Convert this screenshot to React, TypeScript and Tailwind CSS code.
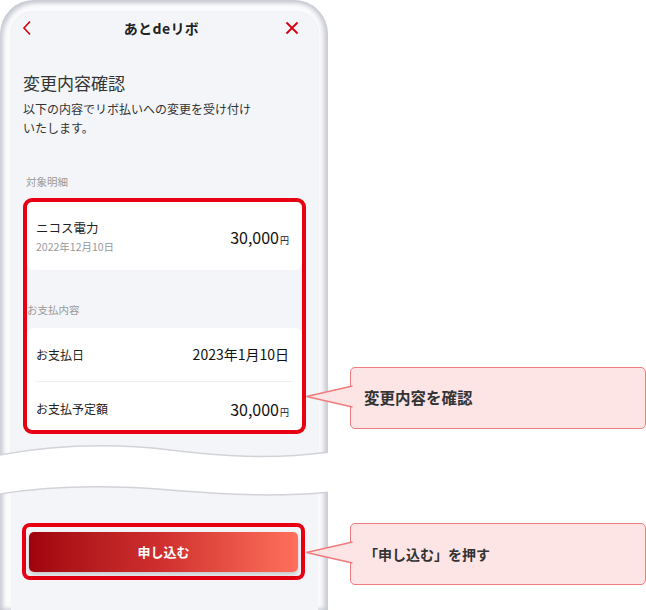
import React from 'react';

const FONT = "font-['Noto_Sans_CJK_JP','Noto_Sans',sans-serif]";

function Callout({ children, className = '' }: { children: React.ReactNode; className?: string }) {
  return (
    <div className={`relative flex h-[62px] w-[296px] items-center rounded-[5px] border-[1.5px] border-[#ef7b7d] bg-[#fde5e6] pl-[13px] ${className}`}>
      {/* tail pointing at the highlighted area */}
      <svg className="absolute left-[-46px] top-[18px] overflow-visible" width="48" height="24" viewBox="0 0 48 24">
        <polyline points="47.5,0 1.5,10.5 47.5,21" fill="#fde5e6" stroke="#ef7b7d" strokeWidth="1.5" strokeLinejoin="miter" />
      </svg>
      {children}
    </div>
  );
}

export default function App() {
  return (
    <div className={`flex h-[610px] w-[646px] overflow-hidden bg-white ${FONT}`}>
      {/* phone */}
      <div className="flex w-[330px] flex-col">
        {/* upper screen */}
        <div className="relative h-[462px] w-[328px] overflow-hidden">
          <div className="h-full rounded-t-[34px] bg-[#fbfbfd] pl-[11px] pr-[10px] pt-[12px] shadow-[inset_3px_3px_4px_#c8cad3,inset_-4px_0_5px_#c8cad3]">
            <div className="flex h-full flex-col rounded-t-[22px] bg-[#f4f5f8] px-[12px] shadow-[0_0_2px_#dcdee4]">
              {/* header */}
              <div className="flex h-[32px] items-center justify-between">
                <svg width="10" height="16" viewBox="0 0 10 16" className="ml-[-1px]">
                  <path d="M8 1.5 L2 8 L8 14.5" fill="none" stroke="#d7000f" strokeWidth="1.6" />
                </svg>
                <span className="ml-[6px] text-[14px] font-bold tracking-[0.4px] text-[#222]">あとdeリボ</span>
                <svg width="14" height="14" viewBox="0 0 14 14" className="mr-[7px]">
                  <path d="M1.5 1.5 L12.5 12.5 M12.5 1.5 L1.5 12.5" stroke="#d7000f" strokeWidth="1.8" />
                </svg>
              </div>

              <h1 className="mt-[27px] text-[17px] leading-[24px] text-[#333]">変更内容確認</h1>
              <p className="mt-[4px] text-[12px] leading-[19px] text-[#333]">
                以下の内容でリボ払いへの変更を受け付け
                <br />
                いたします。
              </p>

              <div className="mt-[37px] pl-[3px] text-[10.5px] leading-[16px] text-[#999]">対象明細</div>

              {/* highlighted area */}
              <div className="mt-[8px] rounded-[9px] border-4 border-[#e60012]">
                <div className="flex h-[68px] items-center justify-between rounded-[7px] bg-white pl-[9px] pr-[13px]">
                  <div className="flex flex-col">
                    <span className="text-[12.5px] leading-[18px] text-[#222]">ニコス電力</span>
                    <span className="mt-[3px] text-[10.5px] leading-[14px] text-[#999]">2022年12月10日</span>
                  </div>
                  <span className="mt-[2px] flex items-baseline text-[#111]">
                    <span className="text-[16px]">30,000</span>
                    <span className="ml-[1px] text-[9px]">円</span>
                  </span>
                </div>

                <div className="pt-[32px] text-[10.5px] leading-[16px] text-[#999]">お支払内容</div>

                <div className="mt-[10px] rounded-[7px] bg-white px-[9px]">
                  <div className="flex h-[54px] items-center justify-between border-b border-[#eeeff2] pr-[4px]">
                    <span className="text-[12px] text-[#222]">お支払日</span>
                    <span className="text-[14px] text-[#111]">2023年1月10日</span>
                  </div>
                  <div className="flex h-[48px] items-center justify-between pr-[4px] pt-[6px]">
                    <span className="text-[12px] text-[#222]">お支払予定額</span>
                    <span className="flex items-baseline text-[#111]">
                      <span className="text-[16px]">30,000</span>
                      <span className="ml-[1px] text-[9px]">円</span>
                    </span>
                  </div>
                </div>
              </div>
            </div>
          </div>
          {/* torn edge */}
          <svg className="absolute bottom-0 left-0" width="330" height="30" viewBox="0 0 330 30">
            <path d="M0 23 C60 12 120 12 170 18 S270 28 330 20 L330 30 L0 30 Z" fill="#fff" />
            <path d="M0 23 C60 12 120 12 170 18 S270 28 330 20" fill="none" stroke="#d2d3d8" strokeWidth="1.5" />
          </svg>
        </div>

        {/* lower screen */}
        <div className="relative mt-[20px] h-[128px] w-[328px] overflow-hidden">
          <div className="h-full bg-[#fbfbfd] pl-[11px] pr-[10px] shadow-[inset_3px_0_4px_#c8cad3,inset_-4px_0_5px_#c8cad3]">
            <div className="h-full bg-[#f4f5f8] pl-[11px] pr-[13px] pt-[41px]">
              <div className="rounded-[8px] border-4 border-[#e60012] px-[3px] pb-[4px] pt-[5px]">
                <button className="flex h-[40px] w-full items-center justify-center rounded-[5px] bg-gradient-to-r from-[#a0020d] via-[#d0302f] to-[#ff6f5b] text-[13px] font-bold text-white shadow-[0_3px_5px_rgba(0,0,0,0.18)]">
                  申し込む
                </button>
              </div>
            </div>
          </div>
          <svg className="absolute left-0 top-0" width="330" height="20" viewBox="0 0 330 20">
            <path d="M0 0 L0 12 C50 4 110 3 170 8 S280 15 330 10 L330 0 Z" fill="#fff" />
            <path d="M0 12 C50 4 110 3 170 8 S280 15 330 10" fill="none" stroke="#d2d3d8" strokeWidth="1.5" />
          </svg>
        </div>
      </div>

      {/* annotations */}
      <div className="flex flex-col pl-[20px]">
        <Callout className="mt-[367px]">
          <span className="text-[15.5px] font-bold text-[#333]">変更内容を確認</span>
        </Callout>
        <Callout className="mt-[94px]">
          <span className="text-[14px] font-bold text-[#333]">「申し込む」を押す</span>
        </Callout>
      </div>
    </div>
  );
}
